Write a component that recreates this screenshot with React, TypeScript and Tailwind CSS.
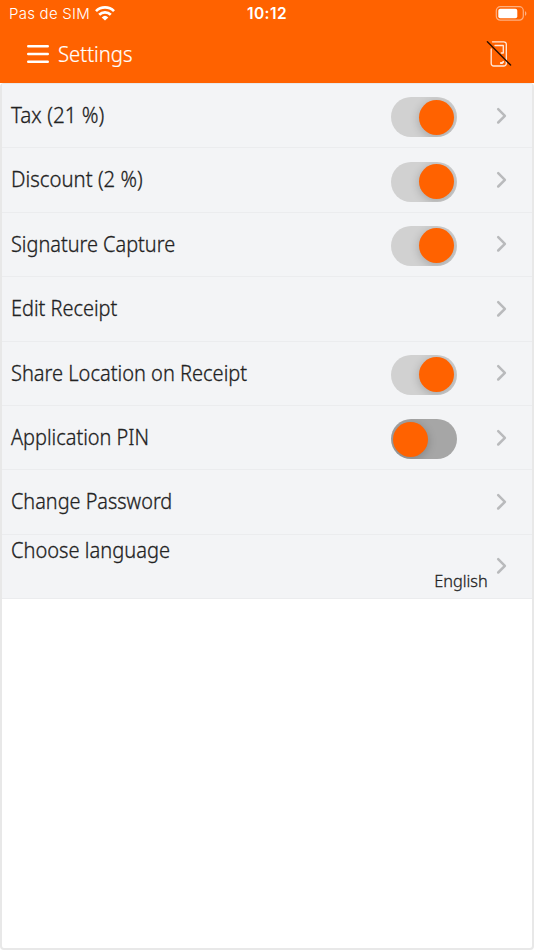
import { useState } from 'react';
import clsx from 'clsx';

interface Setting {
  id: string;
  label: string;
  fit: string;
  enabled?: boolean;
  value?: string;
}

const initialSettings: Setting[] = [
  { id: 'tax', label: 'Tax (21 %)', fit: 'scale-x-[0.983]', enabled: true },
  { id: 'discount', label: 'Discount (2 %)', fit: 'scale-x-[0.969]', enabled: true },
  { id: 'signature', label: 'Signature Capture', fit: 'scale-x-[0.947]', enabled: true },
  { id: 'receipt', label: 'Edit Receipt', fit: 'scale-x-[0.948]' },
  { id: 'location', label: 'Share Location on Receipt', fit: 'scale-x-[0.953]', enabled: true },
  { id: 'pin', label: 'Application PIN', fit: 'scale-x-[0.948]', enabled: false },
  { id: 'password', label: 'Change Password', fit: 'scale-x-[0.945]' },
  { id: 'language', label: 'Choose language', fit: 'scale-x-[0.955]', value: 'English' },
];

function StatusBar() {
  return (
    <div className="grid h-[27px] grid-cols-3 items-center pl-[9px] pr-[7px] font-['Inter',sans-serif] text-white">
      <div className="flex items-center gap-[5.5px]">
        <span className="whitespace-nowrap text-[15px] leading-[27px] tracking-[0.25px]">Pas de SIM</span>
        <svg width="20" height="15" viewBox="0 0 20 15" fill="none" stroke="currentColor" strokeWidth="2.7">
          <path d="M1 5.1a12.8 12.8 0 0 1 18 0" />
          <path d="M4.2 8.7a8.2 8.2 0 0 1 11.6 0" />
          <path d="M6.7 11.4a4.8 4.8 0 0 1 6.6 0L10 14.6z" fill="currentColor" stroke="none" />
        </svg>
      </div>
      <span className="-ml-[2px] text-center text-[15.5px] font-semibold leading-[27px] tracking-[0.4px]">10:12</span>
      <svg className="justify-self-end" width="32" height="15" viewBox="0 0 32 15" fill="none">
        <rect x="1.3" y="0.7" width="27" height="13.5" rx="4" stroke="#ffb080" strokeWidth="1.2" />
        <rect x="3.3" y="2.8" width="19" height="9.4" rx="2" fill="#fff" />
        <path d="M30 5.2c1.8.5 1.8 4.1 0 4.6z" fill="#ffb080" />
      </svg>
    </div>
  );
}

function MenuIcon() {
  return (
    <svg width="22" height="20" viewBox="0 0 22 20" stroke="#fff" strokeWidth="2.4" strokeLinecap="round">
      <path d="M1.2 2.2h19.6M1.2 10h19.6M1.2 17.8h19.6" />
    </svg>
  );
}

function NoTerminalIcon() {
  return (
    <svg width="26" height="28" viewBox="0 0 26 28" fill="none" strokeLinecap="round" strokeLinejoin="round">
      <g stroke="#ffeadd" strokeWidth="1.3">
        <path d="M6.5 1.8h11.300A2.500 2.500 0 0 1 20.300 4.300v19.200a2.500 2.500 0 0 1-2.500 2.500H7.700a2.500 2.500 0 0 1-2.500-2.500V9" />
        <path d="M9 5.5h8.300V13h-2" />
        <path d="M14.8 23h1.300l1.200-1.200" strokeWidth="1.8" />
      </g>
      <path d="M1.4 1.8L24.600 25" stroke="#2a1000" strokeWidth="1.4" />
    </svg>
  );
}

function Toggle({ on, onChange }: { on: boolean; onChange: () => void }) {
  return (
    <button
      role="switch"
      aria-checked={on}
      onClick={onChange}
      className={clsx(
        'mt-[3px] flex h-10 w-[66px] items-center overflow-hidden rounded-full px-[2.5px]',
        on ? 'justify-end bg-[#d1d1d1]' : 'justify-start bg-[#a6a6a6]',
      )}
    >
      <span className="size-[35px] rounded-full bg-[#ff6200] shadow-[0_2px_10px_rgba(0,0,0,0.22)]" />
    </button>
  );
}

function SettingRow({ setting, onToggle }: { setting: Setting; onToggle: (id: string) => void }) {
  return (
    <li className="flex h-[64.4px] items-center border-b border-[#ebecee] bg-[#f3f4f6] pl-[8.5px] pr-[25px]">
      <div className={clsx('flex-1', setting.value ? 'pb-[1px]' : 'pb-[1.5px]')}>
        <span
          className={clsx(
            'block w-max origin-left whitespace-nowrap text-[21px] leading-[30px]',
            setting.fit,
          )}
        >
          {setting.label}
        </span>
        {setting.value && (
          <span className="ml-auto mr-[8.5px] block w-max origin-right scale-x-[0.96] pt-px text-[17px] leading-[30px]">
            {setting.value}
          </span>
        )}
      </div>
      {setting.enabled !== undefined && (
        <Toggle on={setting.enabled} onChange={() => onToggle(setting.id)} />
      )}
      <svg
        className={clsx(setting.enabled !== undefined && 'ml-[39.5px]')}
        width="11"
        height="18"
        viewBox="0 0 11 18"
        fill="none"
        stroke="#b9babc"
        strokeWidth="2.5"
        strokeLinecap="round"
        strokeLinejoin="round"
      >
        <path d="M2.2 2.1l6.700 6.700-6.700 6.700" />
      </svg>
    </li>
  );
}

export default function App() {
  const [settings, setSettings] = useState(initialSettings);

  const handleToggle = (id: string) => {
    setSettings(settings.map((s) => (s.id === id ? { ...s, enabled: !s.enabled } : s)));
  };

  return (
    <div className="flex h-[950px] w-[534px] flex-col overflow-hidden bg-white font-['Noto_Sans',sans-serif] font-light text-[#222]">
      <header className="h-[83px] shrink-0 bg-[#ff6200] text-white">
        <StatusBar />
        <div className="flex h-[54px] items-center pl-[27px] pr-[22px] [-webkit-text-stroke:0.2px]">
          <button aria-label="Menu">
            <MenuIcon />
          </button>
          <h1 className="ml-[9px] flex-1 origin-left scale-x-[0.965] text-[21px] font-light leading-[30px]">Settings</h1>
          <NoTerminalIcon />
        </div>
      </header>
      <main className="flex-1 rounded-sm border-2 border-t border-[#e8e8e8] [-webkit-text-stroke:0.3px]">
        <ul>
          {settings.map((s) => (
            <SettingRow key={s.id} setting={s} onToggle={handleToggle} />
          ))}
        </ul>
      </main>
    </div>
  );
}
